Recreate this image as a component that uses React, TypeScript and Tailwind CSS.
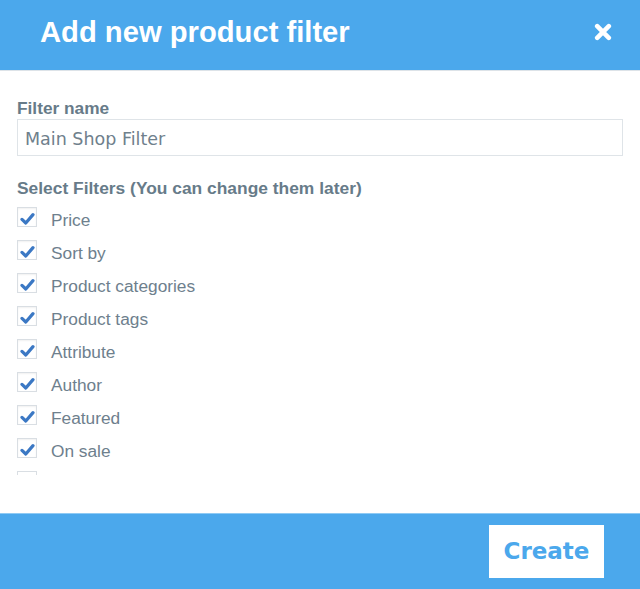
import React from "react";

const filters = [
  "Price",
  "Sort by",
  "Product categories",
  "Product tags",
  "Attribute",
  "Author",
  "Featured",
  "On sale",
];

function Check() {
  return (
    <svg width="15" height="14" viewBox="0 0 15 14" className="block mt-[3px]">
      <path
        d="M2 7.4 L5.8 11 L13 2.6"
        fill="none"
        stroke="#3b78c4"
        strokeWidth="3.2"
        strokeLinecap="round"
        strokeLinejoin="round"
      />
    </svg>
  );
}

export default function App() {
  return (
    <div className="w-[640px] h-[589px] flex flex-col bg-white overflow-hidden">
      <header className="h-[70px] shrink-0 bg-[#4ba8ec] flex items-start justify-between pl-[40px] pr-[28px] pt-[15px]">
        <h1
          className="text-white font-bold text-[29.2px] leading-[34px]"
          style={{ fontFamily: '"Liberation Sans", Arial, sans-serif' }}
        >
          Add new product filter
        </h1>
        <svg width="18" height="18" viewBox="0 0 18 18" className="mt-[8px]">
          <path
            d="M3.2 3.2 L14.8 14.8 M14.8 3.2 L3.2 14.8"
            stroke="white"
            strokeWidth="4.6"
            strokeLinecap="round"
          />
        </svg>
      </header>
      <div className="h-[1px] shrink-0 bg-[#dde3e8]" />
      <main
        className="flex-1 flex flex-col px-[17px] pt-[27px] text-[#677b89]"
        style={{ fontFamily: '"Liberation Sans", Arial, sans-serif' }}
      >
        <label className="font-bold text-[17.3px] leading-[20px]">Filter name</label>
        <div
          className="mt-[1px] h-[37px] border border-[#dfe4e8] flex items-center pl-[7px] pt-[3px] text-[17.5px] text-[#6f808c]"
          style={{ fontFamily: '"DejaVu Sans", Verdana, sans-serif' }}
        >
          Main Shop Filter
        </div>
        <label className="font-bold text-[17.4px] leading-[20px] mt-[22px]">
          Select Filters (You can change them later)
        </label>
        <div className="mt-[9px] h-[268px] overflow-hidden flex flex-col gap-[13px]">
          {filters.map((f) => (
            <div key={f} className="flex items-start shrink-0 h-[20px]">
              <div className="w-[20px] h-[20px] shrink-0 border border-[#d9dee3] bg-white flex items-center justify-center shadow-[inset_0_1px_2px_rgba(0,0,0,0.06)]">
                <Check />
              </div>
              <span className="ml-[14px] mt-[3px] text-[17.3px] leading-[20px] text-[#6e808d]">
                {f}
              </span>
            </div>
          ))}
          <div className="flex items-start shrink-0 h-[20px]">
            <div className="w-[20px] h-[20px] shrink-0 border border-[#d9dee3] bg-white" />
          </div>
        </div>
      </main>
      <div className="h-[1px] shrink-0 bg-[#8fcaf4]" />
      <footer className="h-[75px] shrink-0 bg-[#4ba8ec] flex items-start justify-end pr-[36px] pt-[11px]">
        <button
          className="w-[115px] h-[53px] bg-white text-[#4ba8ec] font-bold text-[23px] flex items-center justify-center"
          style={{ fontFamily: '"DejaVu Sans", Verdana, sans-serif' }}
        >
          Create
        </button>
      </footer>
    </div>
  );
}
